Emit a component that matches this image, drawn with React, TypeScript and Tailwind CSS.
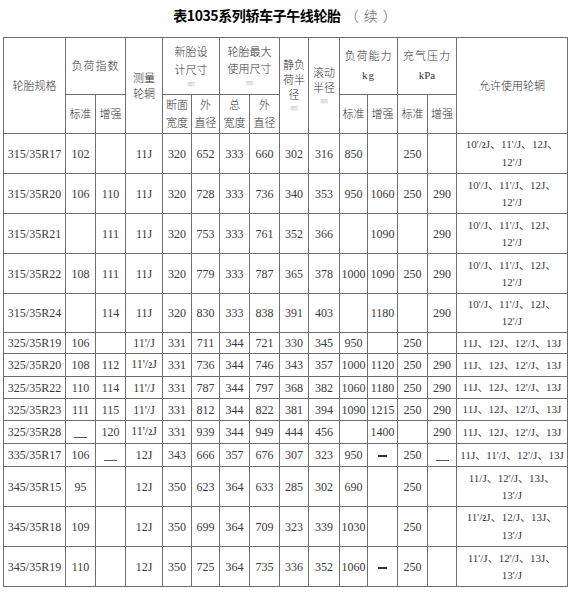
import React from "react";

type Cell = string | React.ReactNode;

interface Row {
  spec: string;
  std: Cell;
  rein: Cell;
  rim: Cell;
  width: string;
  dia: string;
  maxWidth: string;
  maxDia: string;
  staticR: string;
  rollR: string;
  loadStd: string;
  loadRein: Cell;
  pStd: string;
  pRein: Cell;
  allowed: Cell[];
  h: string;
}

const half = <span className="text-[8px] font-bold">2</span>;
const lowDash = <span className="inline-block w-[13px] border-b border-[#555] align-middle translate-y-[4px]" />;
const midDash = <span className="inline-block w-[9px] h-[2px] bg-[#333] align-middle" />;

const r11half = <>11'/{half}J</>;
const r10 = ["10'/J、11'/J、12J、", "12'/J"];
const r11 = ["11J、12J、12'/J、13J"];

const rows: Row[] = [
  { spec: "315/35R17", std: "102", rein: "", rim: "11J", width: "320", dia: "652", maxWidth: "333", maxDia: "660", staticR: "302", rollR: "316", loadStd: "850", loadRein: "", pStd: "250", pRein: "", allowed: [<>10'/{half}J、11'/J、12J、</>, "12'/J"], h: "h-[40px]" },
  { spec: "315/35R20", std: "106", rein: "110", rim: "11J", width: "320", dia: "728", maxWidth: "333", maxDia: "736", staticR: "340", rollR: "353", loadStd: "950", loadRein: "1060", pStd: "250", pRein: "290", allowed: r10, h: "h-[40px]" },
  { spec: "315/35R21", std: "", rein: "111", rim: "11J", width: "320", dia: "753", maxWidth: "333", maxDia: "761", staticR: "352", rollR: "366", loadStd: "", loadRein: "1090", pStd: "", pRein: "290", allowed: r10, h: "h-[40px]" },
  { spec: "315/35R22", std: "108", rein: "111", rim: "11J", width: "320", dia: "779", maxWidth: "333", maxDia: "787", staticR: "365", rollR: "378", loadStd: "1000", loadRein: "1090", pStd: "250", pRein: "290", allowed: r10, h: "h-[40px]" },
  { spec: "315/35R24", std: "", rein: "114", rim: "11J", width: "320", dia: "830", maxWidth: "333", maxDia: "838", staticR: "391", rollR: "403", loadStd: "", loadRein: "1180", pStd: "", pRein: "290", allowed: r10, h: "h-[39px]" },
  { spec: "325/35R19", std: "106", rein: "", rim: "11'/J", width: "331", dia: "711", maxWidth: "344", maxDia: "721", staticR: "330", rollR: "345", loadStd: "950", loadRein: "", pStd: "250", pRein: "", allowed: r11, h: "h-[21px]" },
  { spec: "325/35R20", std: "108", rein: "112", rim: r11half, width: "331", dia: "736", maxWidth: "344", maxDia: "746", staticR: "343", rollR: "357", loadStd: "1000", loadRein: "1120", pStd: "250", pRein: "290", allowed: r11, h: "h-[23px]" },
  { spec: "325/35R22", std: "110", rein: "114", rim: "11'/J", width: "331", dia: "787", maxWidth: "344", maxDia: "797", staticR: "368", rollR: "382", loadStd: "1060", loadRein: "1180", pStd: "250", pRein: "290", allowed: r11, h: "h-[22px]" },
  { spec: "325/35R23", std: "111", rein: "115", rim: "11'/J", width: "331", dia: "812", maxWidth: "344", maxDia: "822", staticR: "381", rollR: "394", loadStd: "1090", loadRein: "1215", pStd: "250", pRein: "290", allowed: r11, h: "h-[22px]" },
  { spec: "325/35R28", std: lowDash, rein: "120", rim: r11half, width: "331", dia: "939", maxWidth: "344", maxDia: "949", staticR: "444", rollR: "456", loadStd: "", loadRein: "1400", pStd: "", pRein: "290", allowed: r11, h: "h-[23px]" },
  { spec: "335/35R17", std: "106", rein: lowDash, rim: "12J", width: "343", dia: "666", maxWidth: "357", maxDia: "676", staticR: "307", rollR: "323", loadStd: "950", loadRein: midDash, pStd: "250", pRein: lowDash, allowed: ["11J、11'/J、12'/J、13J"], h: "h-[23px]" },
  { spec: "345/35R15", std: "95", rein: "", rim: "12J", width: "350", dia: "623", maxWidth: "364", maxDia: "633", staticR: "285", rollR: "302", loadStd: "690", loadRein: "", pStd: "250", pRein: "", allowed: ["11/J、12'/J、13J、", "13'/J"], h: "h-[40px]" },
  { spec: "345/35R18", std: "109", rein: "", rim: "12J", width: "350", dia: "699", maxWidth: "364", maxDia: "709", staticR: "323", rollR: "339", loadStd: "1030", loadRein: "", pStd: "250", pRein: "", allowed: [<>11'/{half}J、12/J、13J、</>, "13'/J"], h: "h-[40px]" },
  { spec: "345/35R19", std: "110", rein: "", rim: "12J", width: "350", dia: "725", maxWidth: "364", maxDia: "735", staticR: "336", rollR: "352", loadStd: "1060", loadRein: midDash, pStd: "250", pRein: "", allowed: ["11'/J、12'/J、13J、", "13'/J"], h: "h-[40px]" },
];

const colWidths = [62, 30, 30, 37, 29, 28, 30, 30, 29, 31, 28, 30, 30, 29, 111];

const td = "border border-[#6e6e6e] text-center align-middle p-0";
const th = `${td} font-light`;
const mm = <div className="text-[7px] leading-[10px] text-[#aaa]">㎜</div>;

export default function App() {
  return (
    <div className="w-[571px] h-[594px] bg-white text-[#3a3a3a] font-[family-name:'Liberation_Serif','Noto_Sans_CJK_SC',serif]">
      <div className="pt-[4px] h-[37px] text-center text-[14px] leading-[22px] font-[family-name:'Noto_Sans_CJK_SC',sans-serif]">
        <span className="font-bold text-black tracking-[-0.4px]">表1035系列轿车子午线轮胎</span>
        <span className="text-[#666] font-light ml-[4px] tracking-[1px]">（ 续 ）</span>
      </div>
      <table className="ml-[3px] w-[564px] table-fixed border-collapse">
        <colgroup>
          {colWidths.map((w, i) => (
            <col key={i} style={{ width: w }} />
          ))}
        </colgroup>
        <thead className="text-[11px] leading-[16px] text-[#333]">
          <tr className="h-[57px]">
            <th rowSpan={2} className={th}>轮胎规格</th>
            <th colSpan={2} className={`${th} tracking-[1px]`}>负荷指数</th>
            <th rowSpan={2} className={th}>测量<br />轮辋</th>
            <th colSpan={2} className={`${th} leading-[18px]`}>新胎设<br />计尺寸{mm}</th>
            <th colSpan={2} className={`${th} leading-[17px]`}>轮胎最大<br />使用尺寸{mm}</th>
            <th rowSpan={2} className={`${th} leading-[15px]`}>静负<br />荷半<br />径{mm}</th>
            <th rowSpan={2} className={`${th} leading-[15px]`}>滚动<br />半径{mm}</th>
            <th colSpan={2} className={`${th} leading-[19px] tracking-[1px]`}>负荷能力<br /><span className="font-[family-name:'Liberation_Serif',serif] font-normal">kg</span></th>
            <th colSpan={2} className={`${th} leading-[19px] tracking-[1px]`}>充气压力<br /><span className="font-[family-name:'Liberation_Serif',serif] font-normal tracking-normal">kPa</span></th>
            <th rowSpan={2} className={th}>允许使用轮辋</th>
          </tr>
          <tr className="h-[39px]">
            <th className={th}>标准</th>
            <th className={th}>增强</th>
            <th className={`${th} leading-[18px]`}>断面<br />宽度</th>
            <th className={`${th} leading-[18px]`}>外<br />直径</th>
            <th className={`${th} leading-[18px]`}>总<br />宽度</th>
            <th className={`${th} leading-[18px]`}>外<br />直径</th>
            <th className={th}>标准</th>
            <th className={th}>增强</th>
            <th className={th}>标准</th>
            <th className={th}>增强</th>
          </tr>
        </thead>
        <tbody className="text-[12px] leading-[16px]">
          {rows.map((r) => (
            <tr key={r.spec} className={r.h}>
              <td className={td}>{r.spec}</td>
              <td className={td}>{r.std}</td>
              <td className={td}>{r.rein}</td>
              <td className={`${td} whitespace-nowrap`}>{r.rim}</td>
              <td className={td}>{r.width}</td>
              <td className={td}>{r.dia}</td>
              <td className={td}>{r.maxWidth}</td>
              <td className={td}>{r.maxDia}</td>
              <td className={td}>{r.staticR}</td>
              <td className={td}>{r.rollR}</td>
              <td className={td}>{r.loadStd}</td>
              <td className={td}>{r.loadRein}</td>
              <td className={td}>{r.pStd}</td>
              <td className={td}>{r.pRein}</td>
              <td className={`${td} whitespace-nowrap text-[11px] leading-[17px]`}>
                {r.allowed.map((a, i) => (
                  <div key={i}>{a}</div>
                ))}
              </td>
            </tr>
          ))}
        </tbody>
      </table>
    </div>
  );
}
